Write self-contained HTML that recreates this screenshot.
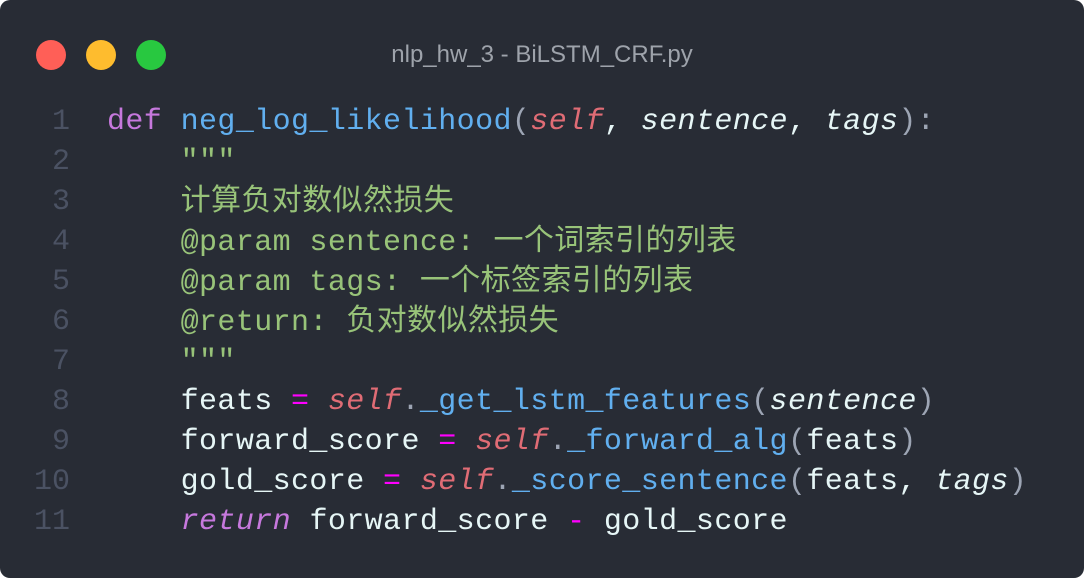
<!DOCTYPE html>
<html><head><meta charset="utf-8"><style>
html,body{margin:0;padding:0;width:1084px;height:578px;overflow:hidden;background:#fff}
.card{position:absolute;left:0;top:0;width:1084px;height:578px;background:#282c35;border-radius:10px}
.dot{position:absolute;top:40px;width:30px;height:30px;border-radius:50%}
.title{position:absolute;left:0;width:1084px;top:40px;text-align:center;font:24px "Liberation Sans",sans-serif;color:#9ea3ab;line-height:30px}
.ln{position:absolute;left:0;width:70px;text-align:right;color:#4b5263}
.code{position:absolute;left:107px;white-space:pre;letter-spacing:0.4px}
.row{position:absolute;height:40px;line-height:40px;font:30px "Liberation Mono","Noto Sans CJK SC",monospace}
.k{color:#c678dd}.f{color:#61afef}.s{color:#e06c75;font-style:italic}.p{font-style:italic;color:#e6f6f6}
.c{color:#98c379}.w{color:#e6f6f6}.o{color:#ff00ff}.g{color:#9da5b4}
</style></head><body><div class="card">
<div class="dot" style="left:36px;background:#ff5f57"></div>
<div class="dot" style="left:86px;background:#febc2e"></div>
<div class="dot" style="left:136px;background:#28c840"></div>
<div class="title">nlp_hw_3 - BiLSTM_CRF.py</div>
<div class="row ln" style="top:105px">1</div>
<div class="row ln" style="top:145px">2</div>
<div class="row ln" style="top:185px">3</div>
<div class="row ln" style="top:225px">4</div>
<div class="row ln" style="top:265px">5</div>
<div class="row ln" style="top:305px">6</div>
<div class="row ln" style="top:345px">7</div>
<div class="row ln" style="top:385px">8</div>
<div class="row ln" style="top:425px">9</div>
<div class="row ln" style="top:465px">10</div>
<div class="row ln" style="top:505px">11</div>
<div class="row code" style="top:105px"><span class="k">def</span> <span class="f">neg_log_likelihood</span><span class="g">(</span><span class="s">self</span><span class="w">, </span><span class="p">sentence</span><span class="w">, </span><span class="p">tags</span><span class="g">):</span></div>
<div class="row code c" style="top:145px">    """</div>
<div class="row code c" style="top:175px">    计算负对数似然损失</div>
<div class="row code c" style="top:215px">    @param sentence: 一个词索引的列表</div>
<div class="row code c" style="top:255px">    @param tags: 一个标签索引的列表</div>
<div class="row code c" style="top:295px">    @return: 负对数似然损失</div>
<div class="row code c" style="top:345px">    """</div>
<div class="row code w" style="top:385px">    feats <span class="o">=</span> <span class="s">self</span><span class="g">.</span><span class="f">_get_lstm_features</span><span class="g">(</span><span class="p">sentence</span><span class="g">)</span></div>
<div class="row code w" style="top:425px">    forward_score <span class="o">=</span> <span class="s">self</span><span class="g">.</span><span class="f">_forward_alg</span><span class="g">(</span>feats<span class="g">)</span></div>
<div class="row code w" style="top:465px">    gold_score <span class="o">=</span> <span class="s">self</span><span class="g">.</span><span class="f">_score_sentence</span><span class="g">(</span>feats, <span class="p">tags</span><span class="g">)</span></div>
<div class="row code w" style="top:505px">    <span class="k" style="font-style:italic">return</span> forward_score <span class="o">-</span> gold_score</div>
</div></body></html>
